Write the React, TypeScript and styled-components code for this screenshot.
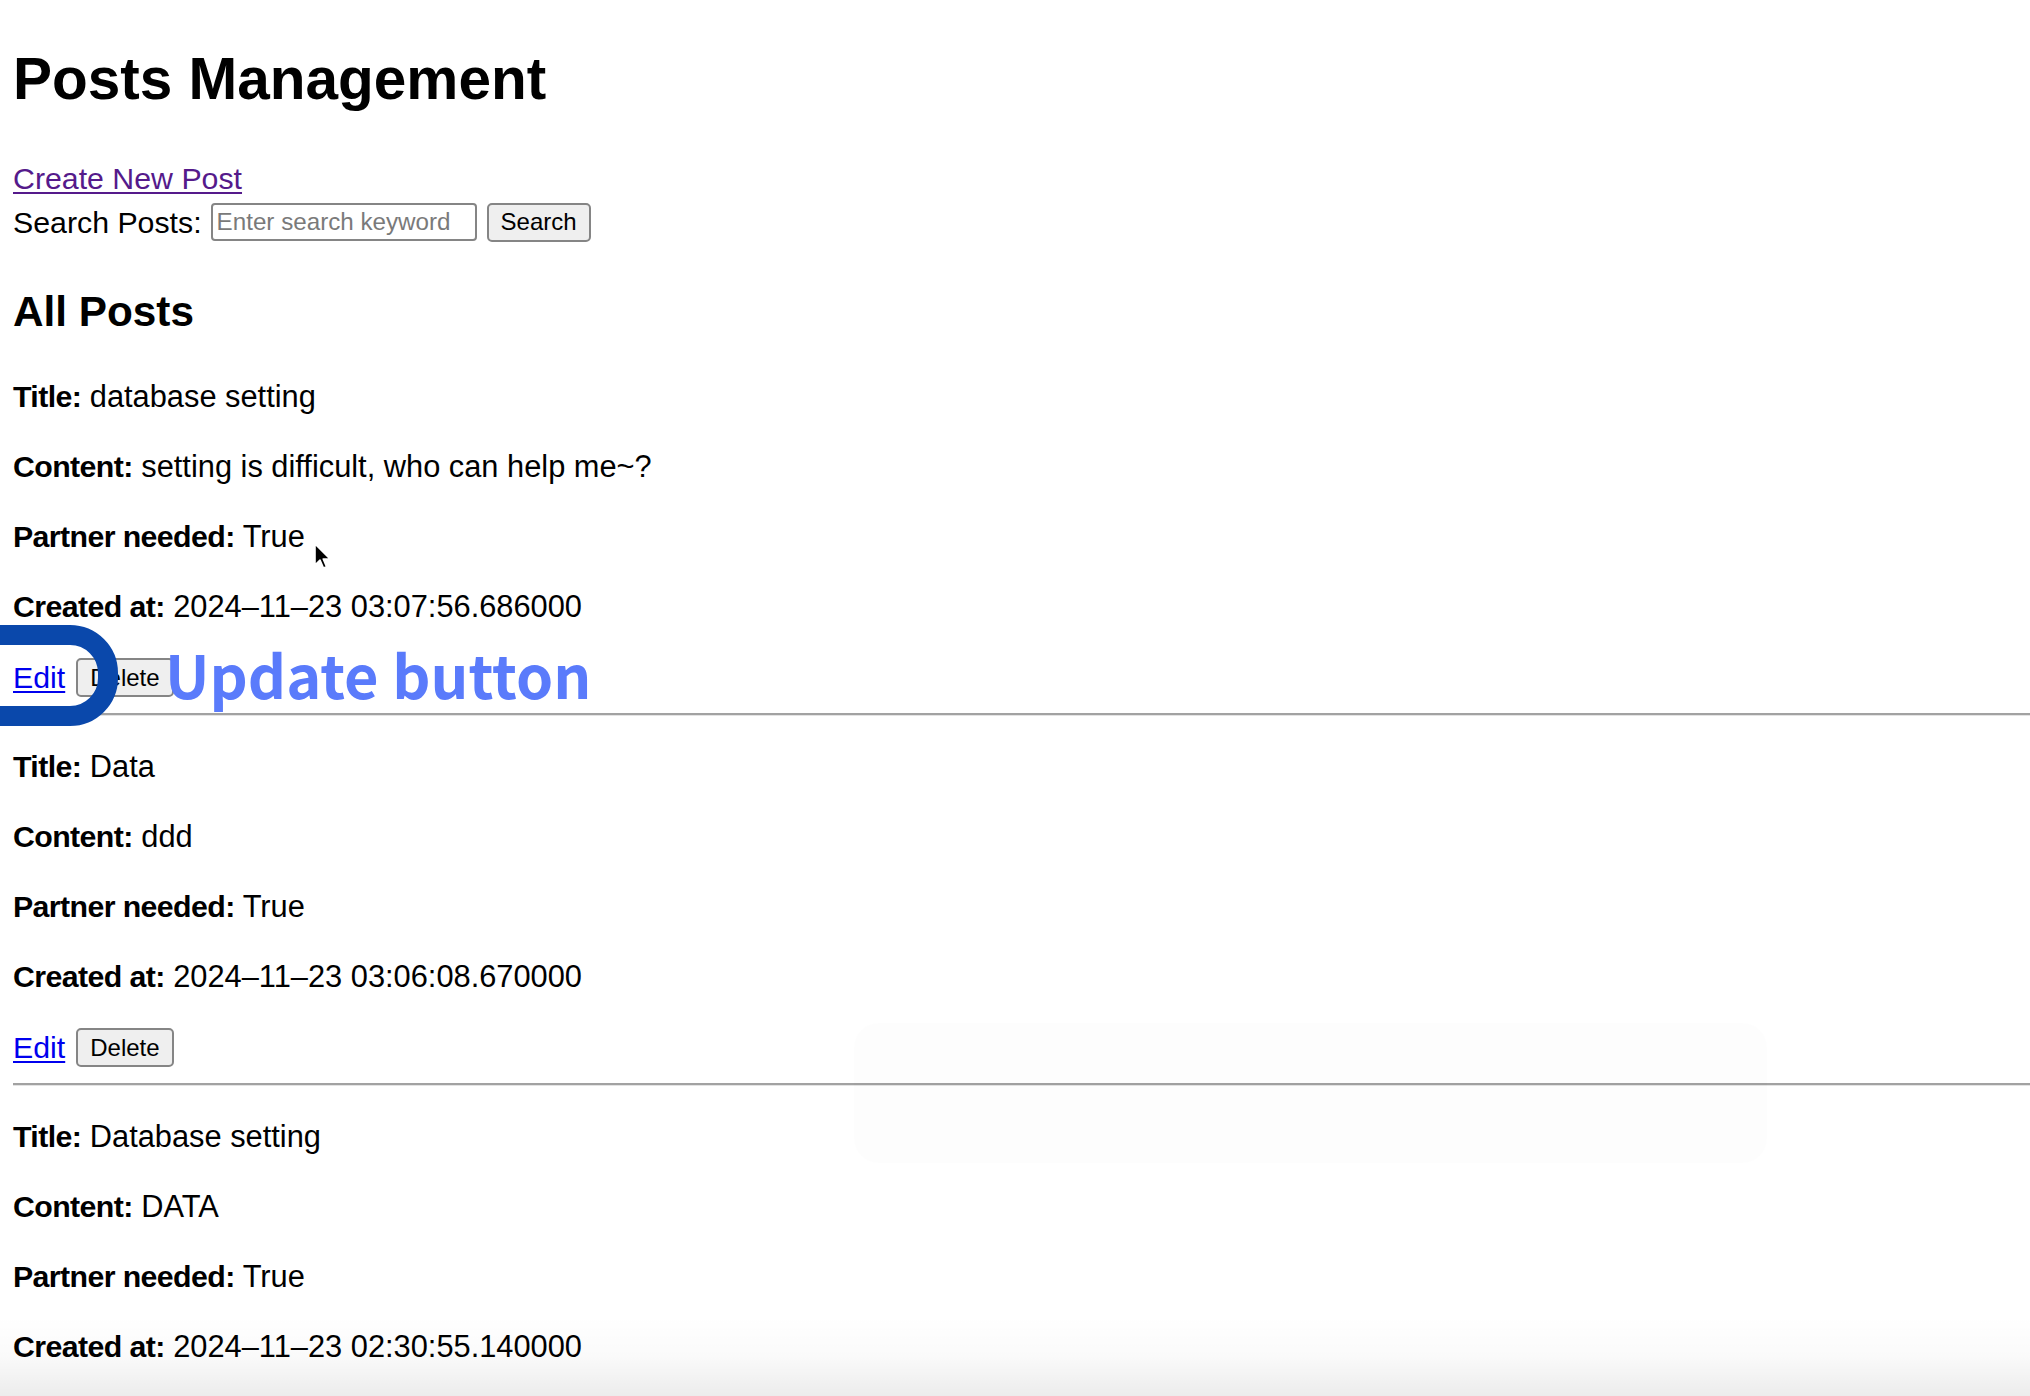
import React from "react";
import styled, { createGlobalStyle } from "styled-components";

const GlobalStyle = createGlobalStyle`
  html, body {
    margin: 0;
    padding: 0;
    background: #ffffff;
    overflow: hidden;
  }
  body {
    font-family: "Liberation Sans", Arial, Helvetica, sans-serif;
    color: #000000;
  }
`;

const Page = styled.div`
  position: relative;
  height: 1396px;
  overflow: hidden;
  padding-left: 13px;
  box-sizing: border-box;
`;

const Heading = styled.h1`
  margin: 42px 0 44px;
  font-size: 58.5px;
  line-height: 74px;
  font-weight: 700;
`;

const CreateLink = styled.a`
  display: block;
  width: fit-content;
  font-size: 30.3px;
  line-height: 37px;
  color: #551a8b;
  text-decoration: underline;
  text-decoration-thickness: 2px;
  text-underline-offset: 3px;
`;

const SearchForm = styled.form`
  display: flex;
  align-items: center;
  height: 38px;
  margin-top: 6px;
`;

const SearchLabel = styled.label`
  font-size: 30.3px;
  line-height: 37px;
  margin-right: 9px;
`;

const SearchInput = styled.input`
  box-sizing: border-box;
  width: 266px;
  height: 38px;
  padding: 0 4px;
  border: 2px solid #858585;
  border-radius: 4px;
  font-family: inherit;
  font-size: 24.2px;
  color: #000;
  background: #fff;
  &::placeholder {
    color: #7a7a7a;
  }
`;

const NativeButton = styled.button<{ $gap?: number }>`
  box-sizing: border-box;
  height: 39px;
  padding: 0 12px;
  margin-left: ${(p) => p.$gap ?? 0}px;
  border: 2px solid #858585;
  border-radius: 5px;
  background: #efefef;
  color: #000;
  font-family: inherit;
  font-size: 24px;
  line-height: 1;
`;

const SectionTitle = styled.h2`
  margin: 43px 0 38px;
  font-size: 42.3px;
  line-height: 56px;
  font-weight: 700;
`;

const Post = styled.article``;

const Field = styled.p`
  margin: 0 0 33px;
  font-size: 30.8px;
  line-height: 37px;
`;

const Label = styled.strong`
  font-weight: 700;
  font-size: 30.3px;
  letter-spacing: -0.6px;
`;

const Actions = styled.div`
  display: flex;
  align-items: center;
  height: 39px;
`;

const EditLink = styled.a`
  font-size: 30.3px;
  line-height: 37px;
  color: #0000ee;
  text-decoration: underline;
  text-decoration-thickness: 2px;
  text-underline-offset: 3px;
  margin-right: 11px;
`;

const Divider = styled.hr`
  margin: 16px 0 32px;
  border: 0;
  border-top: 2px solid #a2a2a2;
  border-bottom: 1px solid #e3e3e3;
  height: 0;
`;

const Ring = styled.svg`
  position: absolute;
  left: -80px;
  top: 625px;
  width: 198px;
  height: 101px;
  overflow: visible;
`;

const Callout = styled.div`
  position: absolute;
  left: 165px;
  top: 644px;
  font-family: "Noto Sans CJK SC", "Noto Sans", sans-serif;
  font-weight: 700;
  font-size: 59.5px;
  line-height: 1;
  color: #5a7bfb;
  white-space: nowrap;
`;

const Cursor = styled.svg`
  position: absolute;
  left: 313px;
  top: 542px;
  width: 20px;
  height: 30px;
`;

const PlayerGhost = styled.div`
  position: absolute;
  left: 854px;
  top: 1023px;
  width: 913px;
  height: 140px;
  border-radius: 24px;
  background: rgba(0, 0, 0, 0.006);
  pointer-events: none;
`;

const BottomFade = styled.div`
  position: absolute;
  left: 0;
  right: 0;
  bottom: 0;
  height: 80px;
  background: linear-gradient(
    to bottom,
    rgba(0, 0, 0, 0) 0%,
    rgba(0, 0, 0, 0.02) 50%,
    rgba(0, 0, 0, 0.075) 100%
  );
  pointer-events: none;
`;

type PostData = {
  title: string;
  content: string;
  partner: string;
  created: string;
};

const posts: PostData[] = [
  {
    title: "database setting",
    content: "setting is difficult, who can help me~?",
    partner: "True",
    created: "2024–11–23 03:07:56.686000",
  },
  {
    title: "Data",
    content: "ddd",
    partner: "True",
    created: "2024–11–23 03:06:08.670000",
  },
  {
    title: "Database setting",
    content: "DATA",
    partner: "True",
    created: "2024–11–23 02:30:55.140000",
  },
];

export default function App() {
  return (
    <>
      <GlobalStyle />
      <Page>
        <Heading>Posts Management</Heading>
        <CreateLink href="#create">Create New Post</CreateLink>
        <SearchForm onSubmit={(e) => e.preventDefault()}>
          <SearchLabel htmlFor="q">Search Posts:</SearchLabel>
          <SearchInput id="q" placeholder="Enter search keyword" />
          <NativeButton $gap={10} type="submit">
            Search
          </NativeButton>
        </SearchForm>
        <SectionTitle>All Posts</SectionTitle>
        {posts.map((p, i) => (
          <Post key={i}>
            <Field>
              <Label>Title:</Label> {p.title}
            </Field>
            <Field>
              <Label>Content:</Label> {p.content}
            </Field>
            <Field>
              <Label>Partner needed:</Label> {p.partner}
            </Field>
            <Field>
              <Label>Created at:</Label> {p.created}
            </Field>
            <Actions>
              <EditLink href="#edit">Edit</EditLink>
              <NativeButton type="button">Delete</NativeButton>
            </Actions>
            <Divider />
          </Post>
        ))}

        <PlayerGhost />

        <Ring viewBox="0 0 198 101">
          <rect
            x="10"
            y="10"
            width="178"
            height="81"
            rx="38"
            ry="38"
            fill="none"
            stroke="#0a48ab"
            strokeWidth="20"
          />
        </Ring>
        <Callout>Update button</Callout>

        <Cursor viewBox="0 0 20 30">
          <path
            d="M2 2 L2 23 L7 18 L10.5 26 L13.5 24.8 L10.2 17 L17 17 Z"
            fill="#000"
            stroke="#fff"
            strokeWidth="1.6"
            strokeLinejoin="round"
          />
        </Cursor>

        <BottomFade />
      </Page>
    </>
  );
}
